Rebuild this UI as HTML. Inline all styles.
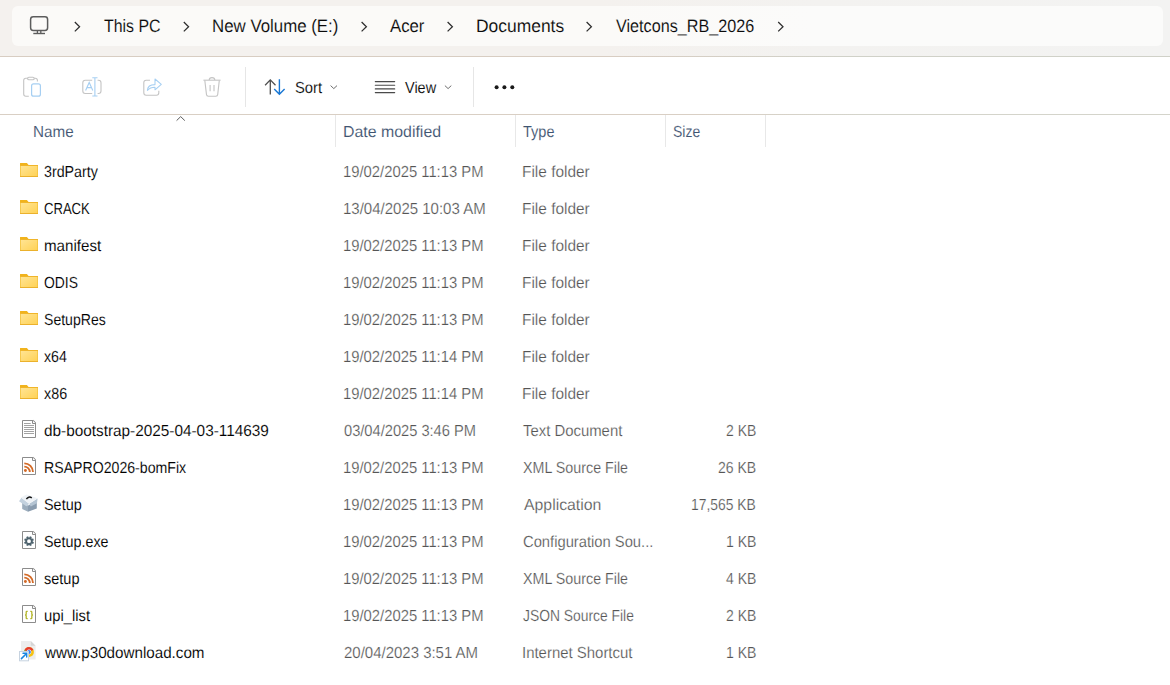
<!DOCTYPE html>
<html><head><meta charset="utf-8"><style>
html,body{margin:0;padding:0;width:1170px;height:685px;overflow:hidden;background:#fff;font-family:"Liberation Sans",sans-serif}
.t{position:absolute;white-space:nowrap;transform-origin:0 0;-webkit-text-stroke:0.1px #fff;text-rendering:geometricPrecision}
.bc{-webkit-text-stroke:0.1px #fbfaf9}
.g{-webkit-text-stroke:0.2px #fff}
#hdr{position:absolute;left:0;top:0;width:1170px;height:56px;background:linear-gradient(90deg,#f4f1ee 0,#f4f1ee 600px,#f3f2f0 820px,#f3f3f2 1170px)}
#hdrb{position:absolute;left:0;top:56px;width:1170px;height:1px;background:linear-gradient(90deg,#d8cdc2 0,#d8cdc2 620px,#d0d1c8 840px,#d0d1c8 1170px)}
#crumb{position:absolute;left:12px;top:6px;width:1151px;height:40px;background:linear-gradient(90deg,#fbfaf8 0,#fbfaf8 600px,#fbfbfa 800px);border-radius:6px}
#tbb{position:absolute;left:0;top:114px;width:1170px;height:1px;background:linear-gradient(90deg,#d9cfc4 0,#d9cfc4 700px,#d4d4cb 860px,#d4d4cb 1170px)}
.vsep{position:absolute;width:1px;background:#e8e8e8}
#ov{position:absolute;left:0;top:0}
</style></head><body>
<div id="hdr"></div><div id="hdrb"></div><div id="crumb"></div>
<div id="tbb"></div>
<div class="vsep" style="left:245px;top:67px;height:40px;background:#e6e6e6"></div>
<div class="vsep" style="left:473px;top:67px;height:40px;background:#e6e6e6"></div>
<div class="vsep" style="left:335px;top:115px;height:32px"></div>
<div class="vsep" style="left:515px;top:115px;height:32px"></div>
<div class="vsep" style="left:665px;top:115px;height:32px"></div>
<div class="vsep" style="left:765px;top:115px;height:32px"></div>
<svg id="ov" width="1170" height="685" viewBox="0 0 1170 685">
<defs><linearGradient id="fgrad" x1="0" y1="0" x2="1" y2="1"><stop offset="0" stop-color="#ffe597"/><stop offset="1" stop-color="#ffd152"/></linearGradient></defs>

<path d="M74.8,22 L79.6,26.7 L74.8,31.4 M183.8,22 L188.6,26.7 L183.8,31.4 M361.6,22 L366.4,26.7 L361.6,31.4 M447.6,22 L452.4,26.7 L447.6,31.4 M586.6,22 L591.4,26.7 L586.6,31.4 M778.2,22 L783,26.7 L778.2,31.4" fill="none" stroke="#2e2e2e" stroke-width="1.25"/>
<rect x="30.6" y="16.8" width="17" height="13.6" rx="2.6" fill="none" stroke="#5c5c5c" stroke-width="1.5"/>
<path d="M37.4,30.8 V33.2 M40.8,30.8 V33.2" stroke="#5c5c5c" stroke-width="1.3"/>
<path d="M33.3,33.5 H45" stroke="#5c5c5c" stroke-width="1.4"/>
<path d="M28.8,96.2 H25.8 Q23.7,96.2 23.7,94.1 V80.3 Q23.7,78.2 25.8,78.2 H35.3 Q37.4,78.2 37.4,80.3 V81.6" fill="none" stroke="#c4c4c4" stroke-width="1.1"/>
<rect x="27.6" y="77.2" width="6.6" height="2.6" rx="1.3" fill="#fff" stroke="#c4c4c4" stroke-width="1.1"/>
<rect x="31.6" y="83.8" width="8.8" height="12.4" rx="2" fill="none" stroke="#a6cff2" stroke-width="1.2"/>
<path d="M92.2,80.3 H85.3 Q82.8,80.3 82.8,82.8 V91 Q82.8,93.5 85.3,93.5 H92.2 M97.6,80.3 H98.5 Q101,80.3 101,82.8 V91 Q101,93.5 98.5,93.5 H97.6" fill="none" stroke="#c4c4c4" stroke-width="1.1"/>
<path d="M94.9,77.6 V96.2 M92.3,77.8 H97.5 M92.3,96 H97.5" fill="none" stroke="#a6cff2" stroke-width="1.1"/>
<path d="M85.6,90.4 L89.2,82.4 L92.8,90.4 M86.9,87.6 H91.5" fill="none" stroke="#a6cff2" stroke-width="1.1"/>
<path d="M150,80.2 H146.2 Q143.8,80.2 143.8,82.6 V92.8 Q143.8,95.2 146.2,95.2 H156.4 Q158.8,95.2 158.8,92.8 V90.8" fill="none" stroke="#c4c4c4" stroke-width="1.1"/>
<path d="M147.4,90.4 C147.6,86.4 150.6,84.6 155,84.6 V79 L161.3,84.4 L155,89.8 V87.2 C151.6,87.2 149.2,88.2 147.4,90.4 Z" fill="none" stroke="#a6cff2" stroke-width="1.05" stroke-linejoin="round"/>
<path d="M203.4,80.2 H220.6" stroke="#c4c4c4" stroke-width="1.1"/>
<path d="M209.2,80 Q209.2,77.6 212,77.6 Q214.8,77.6 214.8,80" fill="none" stroke="#c4c4c4" stroke-width="1.1"/>
<path d="M204.8,80.4 L206.5,94.6 Q206.7,96.2 208.3,96.2 H215.9 Q217.5,96.2 217.7,94.6 L219.3,80.4" fill="none" stroke="#c4c4c4" stroke-width="1.1"/>
<path d="M210.1,85 V91.2 M214,85 V91.2" stroke="#c4c4c4" stroke-width="1.1"/>
<path d="M270.3,94.4 V79.8 M265.1,85.2 L270.3,79.9 L275.5,85.2" fill="none" stroke="#4f4f4f" stroke-width="1.3"/>
<path d="M279.4,79.3 V94.1 M274.2,88.9 L279.4,94.2 L284.6,88.9" fill="none" stroke="#1877d4" stroke-width="1.4"/>
<path d="M330.6,85.6 L333.8,88.6 L337,85.6 M444.9,85.6 L448.1,88.6 L451.3,85.6" fill="none" stroke="#6e6e6e" stroke-width="1"/>
<path d="M375.3,81.6 H394.7 M375.3,85.3 H394.7 M375.3,88.9 H394.7 M375.3,92.6 H394.7" stroke="#4a4a4a" stroke-width="1.1" stroke-linecap="round"/>
<circle cx="496.6" cy="87.3" r="2" fill="#1a1a1a"/><circle cx="504.4" cy="87.3" r="2" fill="#1a1a1a"/><circle cx="512.3" cy="87.3" r="2" fill="#1a1a1a"/>
<path d="M176.6,120.6 L180.7,116.6 L184.8,120.6" fill="none" stroke="#5a5a5a" stroke-width="1"/>

<path d="M20,163.3 Q20,163 20.3,163 H26.9 L28.6,165 H38 V167 H20 Z" fill="#f1b31c"/><rect x="20" y="165.4" width="18" height="11.6" rx="0.4" fill="url(#fgrad)"/><path d="M20,165.5 H38" stroke="#f0b52a" stroke-width="1"/><path d="M20,176.5 H38" stroke="#ebb12c" stroke-width="1"/><path d="M20.5,166 V176 M37.5,166 V176" stroke="#f5c440" stroke-width="1" opacity="0.8"/><path d="M20,200.3 Q20,200 20.3,200 H26.9 L28.6,202 H38 V204 H20 Z" fill="#f1b31c"/><rect x="20" y="202.4" width="18" height="11.6" rx="0.4" fill="url(#fgrad)"/><path d="M20,202.5 H38" stroke="#f0b52a" stroke-width="1"/><path d="M20,213.5 H38" stroke="#ebb12c" stroke-width="1"/><path d="M20.5,203 V213 M37.5,203 V213" stroke="#f5c440" stroke-width="1" opacity="0.8"/><path d="M20,237.3 Q20,237 20.3,237 H26.9 L28.6,239 H38 V241 H20 Z" fill="#f1b31c"/><rect x="20" y="239.4" width="18" height="11.6" rx="0.4" fill="url(#fgrad)"/><path d="M20,239.5 H38" stroke="#f0b52a" stroke-width="1"/><path d="M20,250.5 H38" stroke="#ebb12c" stroke-width="1"/><path d="M20.5,240 V250 M37.5,240 V250" stroke="#f5c440" stroke-width="1" opacity="0.8"/><path d="M20,274.3 Q20,274 20.3,274 H26.9 L28.6,276 H38 V278 H20 Z" fill="#f1b31c"/><rect x="20" y="276.4" width="18" height="11.6" rx="0.4" fill="url(#fgrad)"/><path d="M20,276.5 H38" stroke="#f0b52a" stroke-width="1"/><path d="M20,287.5 H38" stroke="#ebb12c" stroke-width="1"/><path d="M20.5,277 V287 M37.5,277 V287" stroke="#f5c440" stroke-width="1" opacity="0.8"/><path d="M20,311.3 Q20,311 20.3,311 H26.9 L28.6,313 H38 V315 H20 Z" fill="#f1b31c"/><rect x="20" y="313.4" width="18" height="11.6" rx="0.4" fill="url(#fgrad)"/><path d="M20,313.5 H38" stroke="#f0b52a" stroke-width="1"/><path d="M20,324.5 H38" stroke="#ebb12c" stroke-width="1"/><path d="M20.5,314 V324 M37.5,314 V324" stroke="#f5c440" stroke-width="1" opacity="0.8"/><path d="M20,348.3 Q20,348 20.3,348 H26.9 L28.6,350 H38 V352 H20 Z" fill="#f1b31c"/><rect x="20" y="350.4" width="18" height="11.6" rx="0.4" fill="url(#fgrad)"/><path d="M20,350.5 H38" stroke="#f0b52a" stroke-width="1"/><path d="M20,361.5 H38" stroke="#ebb12c" stroke-width="1"/><path d="M20.5,351 V361 M37.5,351 V361" stroke="#f5c440" stroke-width="1" opacity="0.8"/><path d="M20,385.3 Q20,385 20.3,385 H26.9 L28.6,387 H38 V389 H20 Z" fill="#f1b31c"/><rect x="20" y="387.4" width="18" height="11.6" rx="0.4" fill="url(#fgrad)"/><path d="M20,387.5 H38" stroke="#f0b52a" stroke-width="1"/><path d="M20,398.5 H38" stroke="#ebb12c" stroke-width="1"/><path d="M20.5,388 V398 M37.5,388 V398" stroke="#f5c440" stroke-width="1" opacity="0.8"/><path d="M22.5,420.5 H33.6 L35.5,422.4 V437.5 H22.5 Z" fill="#ffffff" stroke="#8c8c8c" stroke-width="1"/><path d="M32.5,420.5 V423.5 H35.5" fill="none" stroke="#8c8c8c" stroke-width="1"/><path d="M33.3,421.2 L34.8,422.7" stroke="#c8c8c8" stroke-width="0.8"/><path d="M24,423.5 H30.7 M24,425.5 H34 M24,427.5 H34 M24,429.5 H34 M24,431.5 H34 M24,433.5 H34" stroke="#a3a3a3" stroke-width="1"/><path d="M22.5,457.5 H33.6 L35.5,459.4 V474.5 H22.5 Z" fill="#ffffff" stroke="#8c8c8c" stroke-width="1"/><path d="M32.5,457.5 V460.5 H35.5" fill="none" stroke="#8c8c8c" stroke-width="1"/><path d="M33.3,458.2 L34.8,459.7" stroke="#c8c8c8" stroke-width="0.8"/><circle cx="25.4" cy="470.5" r="1.45" fill="#d36a27"/><path d="M24.3,466.6 A5.5,5.5 0 0 1 29.8,472.1" fill="none" stroke="#d36a27" stroke-width="1.85"/><path d="M24.3,463.40000000000003 A8.7,8.7 0 0 1 33.0,472.1" fill="none" stroke="#d36a27" stroke-width="1.85"/><g transform="translate(14,490)"><path d="M8.2,12.6 L14,15.4 V21.8 L8.2,19 Z" fill="#9cadbd"/><path d="M14,15.4 L22.8,11.8 V18.4 L14,21.8 Z" fill="#8a9caf"/><path d="M5,11.3 L7.4,7.8 L15.2,13.7 L12.4,16.2 Z" fill="#c3d1de"/><path d="M15.2,13.7 L23.6,8.4 L23,13.2 L16.8,16.6 Z" fill="#b4c4d3"/><path d="M7,7.6 L12.5,4.5 L23.6,8.2 L15.2,13.8 Z" fill="#eef2f6"/><path d="M12.4,9.2 Q14.6,5.8 17.8,7.9" fill="none" stroke="#161616" stroke-width="1.45"/></g><path d="M22.5,531.5 H33.6 L35.5,533.4 V548.5 H22.5 Z" fill="#ffffff" stroke="#8c8c8c" stroke-width="1"/><path d="M32.5,531.5 V534.5 H35.5" fill="none" stroke="#8c8c8c" stroke-width="1"/><path d="M33.3,532.2 L34.8,533.7" stroke="#c8c8c8" stroke-width="0.8"/><path d="M32.68,541.54 L33.91,542.16 L33.15,543.99 L31.85,543.56 L31.62,543.81 L31.36,544.05 L31.79,545.35 L29.96,546.11 L29.34,544.88 L29.01,544.90 L28.66,544.88 L28.04,546.11 L26.21,545.35 L26.64,544.05 L26.39,543.82 L26.15,543.56 L24.85,543.99 L24.09,542.16 L25.32,541.54 L25.30,541.21 L25.32,540.86 L24.09,540.24 L24.85,538.41 L26.15,538.84 L26.38,538.59 L26.64,538.35 L26.21,537.05 L28.04,536.29 L28.66,537.52 L28.99,537.50 L29.34,537.52 L29.96,536.29 L31.79,537.05 L31.36,538.35 L31.61,538.58 L31.85,538.84 L33.15,538.41 L33.91,540.24 L32.68,540.86 L32.70,541.19 Z M30.9,541.2 A1.9,1.9 0 1 0 27.1,541.2 A1.9,1.9 0 1 0 30.9,541.2 Z" fill="#4d626d" fill-rule="evenodd"/><path d="M22.5,568.5 H33.6 L35.5,570.4 V585.5 H22.5 Z" fill="#ffffff" stroke="#8c8c8c" stroke-width="1"/><path d="M32.5,568.5 V571.5 H35.5" fill="none" stroke="#8c8c8c" stroke-width="1"/><path d="M33.3,569.2 L34.8,570.7" stroke="#c8c8c8" stroke-width="0.8"/><circle cx="25.4" cy="581.5" r="1.45" fill="#d36a27"/><path d="M24.3,577.6 A5.5,5.5 0 0 1 29.8,583.1" fill="none" stroke="#d36a27" stroke-width="1.85"/><path d="M24.3,574.4 A8.7,8.7 0 0 1 33.0,583.1" fill="none" stroke="#d36a27" stroke-width="1.85"/><path d="M22.5,605.5 H33.6 L35.5,607.4 V622.5 H22.5 Z" fill="#ffffff" stroke="#8c8c8c" stroke-width="1"/><path d="M32.5,605.5 V608.5 H35.5" fill="none" stroke="#8c8c8c" stroke-width="1"/><path d="M33.3,606.2 L34.8,607.7" stroke="#c8c8c8" stroke-width="0.8"/><path d="M27.7,611.4 H26.9 Q26.2,611.4 26.2,612.1 V614.2 Q26.2,614.9 25.1,615 Q26.2,615.1 26.2,615.8 V617.9 Q26.2,618.6 26.9,618.6 H27.7" fill="none" stroke="#b2b428" stroke-width="1.3"/><path d="M30.3,611.4 H31.1 Q31.8,611.4 31.8,612.1 V614.2 Q31.8,614.9 32.9,615 Q31.8,615.1 31.8,615.8 V617.9 Q31.8,618.6 31.1,618.6 H30.3" fill="none" stroke="#b2b428" stroke-width="1.3"/><path d="M21,641 H30.8 L35.6,645.8 V659.4 H21 Z" fill="#ededed"/><path d="M30.8,641 V645.8 H35.6 Z" fill="#d6d6d6"/><circle cx="29" cy="652" r="4.9" fill="#f5c211"/><path d="M29,652 L24.4,650.3 A4.9,4.9 0 0 1 33.4,649.8 Z" fill="#e53b2e"/><path d="M29,652 L24.4,650.3 A4.9,4.9 0 0 0 28.4,656.9 Z" fill="#2da94f"/><circle cx="29" cy="652" r="2.4" fill="#ffffff"/><circle cx="29" cy="652" r="1.9" fill="#3b7bf0"/><rect x="19.5" y="651.5" width="9" height="9.3" fill="#ffffff" stroke="#c7d3e0" stroke-width="1"/><path d="M21.4,658.6 L26.3,653.7" stroke="#1a86e0" stroke-width="1.5" stroke-linecap="round"/><path d="M23,653.3 H26.7 V657" fill="none" stroke="#1a86e0" stroke-width="1.4" stroke-linecap="round"/>
</svg>
<span class="t bc" style="left:103.95px;top:17px;font-size:18px;line-height:18px;color:#0a0a0a;transform:scaleX(0.8839)">This PC</span><span class="t bc" style="left:211.64px;top:17px;font-size:18px;line-height:18px;color:#0a0a0a;transform:scaleX(0.9358)">New Volume (E:)</span><span class="t bc" style="left:390.25px;top:17px;font-size:18px;line-height:18px;color:#0a0a0a;transform:scaleX(0.9304)">Acer</span><span class="t bc" style="left:475.80px;top:17px;font-size:18px;line-height:18px;color:#0a0a0a;transform:scaleX(0.9680)">Documents</span><span class="t bc" style="left:615.61px;top:17px;font-size:18px;line-height:18px;color:#0a0a0a;transform:scaleX(0.8983)">Vietcons_RB_2026</span><span class="t" style="left:294.81px;top:81px;font-size:16px;line-height:16px;color:#0a0a0a;transform:scaleX(0.9228)">Sort</span><span class="t" style="left:404.81px;top:81px;font-size:16px;line-height:16px;color:#0a0a0a;transform:scaleX(0.9054)">View</span><span class="t" style="left:32.56px;top:125px;font-size:16px;line-height:16px;color:#3f5471;transform:scaleX(0.9533)">Name</span><span class="t" style="left:342.51px;top:125px;font-size:16px;line-height:16px;color:#3f5471;transform:scaleX(0.9933)">Date modified</span><span class="t" style="left:523.18px;top:125px;font-size:16px;line-height:16px;color:#3f5471;transform:scaleX(0.9064)">Type</span><span class="t" style="left:672.84px;top:125px;font-size:16px;line-height:16px;color:#3f5471;transform:scaleX(0.8754)">Size</span><span class="t" style="left:43.97px;top:165px;font-size:16px;line-height:16px;color:#000000;transform:scaleX(0.8896)">3rdParty</span><span class="t g" style="left:343.19px;top:165px;font-size:16px;line-height:16px;color:#555555;transform:scaleX(0.9257)">19/02/2025 11:13 PM</span><span class="t g" style="left:522.45px;top:165px;font-size:16px;line-height:16px;color:#555555;transform:scaleX(0.9643)">File folder</span><span class="t" style="left:43.85px;top:202px;font-size:16px;line-height:16px;color:#000000;transform:scaleX(0.8174)">CRACK</span><span class="t g" style="left:343.17px;top:202px;font-size:16px;line-height:16px;color:#555555;transform:scaleX(0.9378)">13/04/2025 10:03 AM</span><span class="t g" style="left:522.45px;top:202px;font-size:16px;line-height:16px;color:#555555;transform:scaleX(0.9643)">File folder</span><span class="t" style="left:43.51px;top:239px;font-size:16px;line-height:16px;color:#000000;transform:scaleX(0.9460)">manifest</span><span class="t g" style="left:343.19px;top:239px;font-size:16px;line-height:16px;color:#555555;transform:scaleX(0.9257)">19/02/2025 11:13 PM</span><span class="t g" style="left:522.45px;top:239px;font-size:16px;line-height:16px;color:#555555;transform:scaleX(0.9643)">File folder</span><span class="t" style="left:43.85px;top:276px;font-size:16px;line-height:16px;color:#000000;transform:scaleX(0.8685)">ODIS</span><span class="t g" style="left:343.19px;top:276px;font-size:16px;line-height:16px;color:#555555;transform:scaleX(0.9257)">19/02/2025 11:13 PM</span><span class="t g" style="left:522.45px;top:276px;font-size:16px;line-height:16px;color:#555555;transform:scaleX(0.9643)">File folder</span><span class="t" style="left:43.84px;top:313px;font-size:16px;line-height:16px;color:#000000;transform:scaleX(0.8789)">SetupRes</span><span class="t g" style="left:343.19px;top:313px;font-size:16px;line-height:16px;color:#555555;transform:scaleX(0.9257)">19/02/2025 11:13 PM</span><span class="t g" style="left:522.45px;top:313px;font-size:16px;line-height:16px;color:#555555;transform:scaleX(0.9643)">File folder</span><span class="t" style="left:44.32px;top:350px;font-size:16px;line-height:16px;color:#000000;transform:scaleX(0.8867)">x64</span><span class="t g" style="left:343.19px;top:350px;font-size:16px;line-height:16px;color:#555555;transform:scaleX(0.9257)">19/02/2025 11:14 PM</span><span class="t g" style="left:522.45px;top:350px;font-size:16px;line-height:16px;color:#555555;transform:scaleX(0.9643)">File folder</span><span class="t" style="left:44.32px;top:387px;font-size:16px;line-height:16px;color:#000000;transform:scaleX(0.8956)">x86</span><span class="t g" style="left:343.19px;top:387px;font-size:16px;line-height:16px;color:#555555;transform:scaleX(0.9257)">19/02/2025 11:14 PM</span><span class="t g" style="left:522.45px;top:387px;font-size:16px;line-height:16px;color:#555555;transform:scaleX(0.9643)">File folder</span><span class="t" style="left:43.88px;top:424px;font-size:16px;line-height:16px;color:#000000;transform:scaleX(0.9586)">db-bootstrap-2025-04-03-114639</span><span class="t g" style="left:343.75px;top:424px;font-size:16px;line-height:16px;color:#555555;transform:scaleX(0.9156)">03/04/2025 3:46 PM</span><span class="t g" style="left:523.37px;top:424px;font-size:16px;line-height:16px;color:#555555;transform:scaleX(0.9308)">Text Document</span><span class="t g" style="left:725.70px;top:424px;font-size:16px;line-height:16px;color:#555555;transform:scaleX(0.8744)">2 KB</span><span class="t" style="left:43.85px;top:461px;font-size:16px;line-height:16px;color:#000000;transform:scaleX(0.8830)">RSAPRO2026-bomFix</span><span class="t g" style="left:343.19px;top:461px;font-size:16px;line-height:16px;color:#555555;transform:scaleX(0.9257)">19/02/2025 11:13 PM</span><span class="t g" style="left:523.39px;top:461px;font-size:16px;line-height:16px;color:#555555;transform:scaleX(0.8928)">XML Source File</span><span class="t g" style="left:717.80px;top:461px;font-size:16px;line-height:16px;color:#555555;transform:scaleX(0.8772)">26 KB</span><span class="t" style="left:43.82px;top:498px;font-size:16px;line-height:16px;color:#000000;transform:scaleX(0.9010)">Setup</span><span class="t g" style="left:343.19px;top:498px;font-size:16px;line-height:16px;color:#555555;transform:scaleX(0.9257)">19/02/2025 11:13 PM</span><span class="t g" style="left:523.65px;top:498px;font-size:16px;line-height:16px;color:#555555;transform:scaleX(0.9883)">Application</span><span class="t g" style="left:691.36px;top:498px;font-size:16px;line-height:16px;color:#555555;transform:scaleX(0.8652)">17,565 KB</span><span class="t" style="left:43.83px;top:535px;font-size:16px;line-height:16px;color:#000000;transform:scaleX(0.8952)">Setup.exe</span><span class="t g" style="left:343.19px;top:535px;font-size:16px;line-height:16px;color:#555555;transform:scaleX(0.9257)">19/02/2025 11:13 PM</span><span class="t g" style="left:522.96px;top:535px;font-size:16px;line-height:16px;color:#555555;transform:scaleX(0.9217)">Configuration Sou...</span><span class="t g" style="left:725.55px;top:535px;font-size:16px;line-height:16px;color:#555555;transform:scaleX(0.8790)">1 KB</span><span class="t" style="left:44.09px;top:572px;font-size:16px;line-height:16px;color:#000000;transform:scaleX(0.9067)">setup</span><span class="t g" style="left:343.19px;top:572px;font-size:16px;line-height:16px;color:#555555;transform:scaleX(0.9257)">19/02/2025 11:13 PM</span><span class="t g" style="left:523.39px;top:572px;font-size:16px;line-height:16px;color:#555555;transform:scaleX(0.8928)">XML Source File</span><span class="t g" style="left:725.69px;top:572px;font-size:16px;line-height:16px;color:#555555;transform:scaleX(0.8746)">4 KB</span><span class="t" style="left:43.53px;top:609px;font-size:16px;line-height:16px;color:#000000;transform:scaleX(0.9250)">upi_list</span><span class="t g" style="left:343.19px;top:609px;font-size:16px;line-height:16px;color:#555555;transform:scaleX(0.9257)">19/02/2025 11:13 PM</span><span class="t g" style="left:523.48px;top:609px;font-size:16px;line-height:16px;color:#555555;transform:scaleX(0.8662)">JSON Source File</span><span class="t g" style="left:725.70px;top:609px;font-size:16px;line-height:16px;color:#555555;transform:scaleX(0.8744)">2 KB</span><span class="t" style="left:44.50px;top:646px;font-size:16px;line-height:16px;color:#000000;transform:scaleX(0.9488)">www.p30download.com</span><span class="t g" style="left:343.55px;top:646px;font-size:16px;line-height:16px;color:#555555;transform:scaleX(0.9362)">20/04/2023 3:51 AM</span><span class="t g" style="left:522.35px;top:646px;font-size:16px;line-height:16px;color:#555555;transform:scaleX(0.9336)">Internet Shortcut</span><span class="t g" style="left:725.55px;top:646px;font-size:16px;line-height:16px;color:#555555;transform:scaleX(0.8790)">1 KB</span>
</body></html>
